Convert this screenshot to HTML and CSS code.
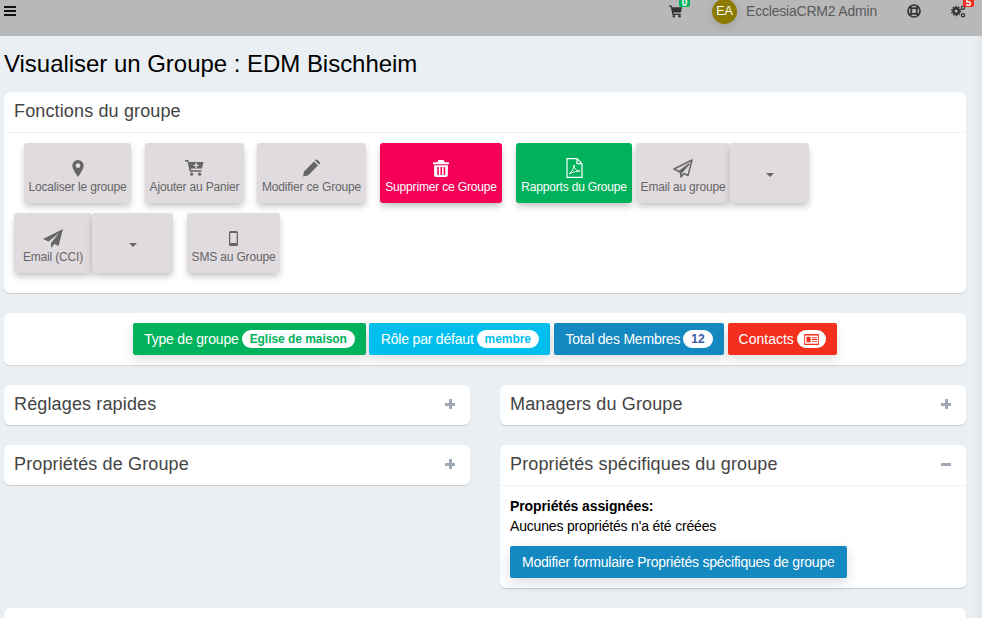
FILE: index.html
```html
<!DOCTYPE html>
<html lang="fr">
<head>
<meta charset="utf-8">
<title>Visualiser un Groupe</title>
<link rel="stylesheet" href="styles.css">
</head>
<body>
<header class="navbar">
  <svg class="burger" viewBox="0 0 12 10" width="12" height="10"><path d="M0 0h12v2H0zM0 4h12v2H0zM0 8h12v2H0z" fill="#111"/></svg>
  <div class="nav-right">
    <span class="nav-item cart">
      <svg viewBox="0 0 16 14" width="14" height="13"><path d="M0 0h3l.5 2H15l-1.500 6H5l.3 1.500H13.500V11H4L2 1.500H0z" fill="#333"/><circle cx="5.500" cy="12.500" r="1.400" fill="#333"/><circle cx="12" cy="12.500" r="1.400" fill="#333"/></svg>
      <span class="nav-badge green">0</span>
    </span>
    <span class="avatar">EA</span>
    <span class="nav-user">EcclesiaCRM2 Admin</span>
    <svg class="lifebuoy" viewBox="0 0 14 14" width="14" height="14"><circle cx="7" cy="7" r="6" fill="none" stroke="#333" stroke-width="1.700"/><circle cx="7" cy="7" r="3" fill="none" stroke="#333" stroke-width="1.500"/><path d="M2.800 2.800l2.200 2.200M11.200 2.800L9 5M2.800 11.200L5 9M11.200 11.200L9 9" stroke="#333" stroke-width="2.200"/></svg>
    <span class="nav-item cogs">
      <svg viewBox="0 0 16 14" width="15" height="14"><circle cx="5.500" cy="7" r="3" fill="none" stroke="#333" stroke-width="2.600"/><circle cx="5.500" cy="7" r="4.900" fill="none" stroke="#333" stroke-width="1.300" stroke-dasharray="1.600 1.480"/><circle cx="12.800" cy="11.500" r="1.700" fill="none" stroke="#333" stroke-width="1.400"/><circle cx="12.800" cy="3.500" r="1.700" fill="none" stroke="#333" stroke-width="1.400"/></svg>
      <span class="nav-badge red">5</span>
    </span>
  </div>
</header>
<main class="content">
  <h1 class="page-title">Visualiser un Groupe : EDM Bischheim</h1>

  <section class="card">
    <h2 class="card-head">Fonctions du groupe</h2>
    <div class="actions">
      <div class="btn-row first">
        <a class="app w107 gap14"><span class="ico"><svg viewBox="0 0 12 18" width="12" height="17"><path fill-rule="evenodd" d="M6 0a6 6 0 0 1 6 6c0 3-3.500 8.500-6 12C3.500 14.500 0 9 0 6a6 6 0 0 1 6-6zm0 3.500a2.500 2.500 0 1 0 0 5 2.500 2.500 0 0 0 0-5z" fill="#666"/></svg></span><span>Localiser le groupe</span></a>
        <a class="app w99 gap13"><span class="ico"><svg viewBox="0 0 20 17" width="19" height="16"><path fill-rule="evenodd" d="M0 0h3.500l.5 2h15.500l-1.500 7H6l.4 2h11v1.500H5L2.500 1.500H0zM11 3v2H9v1.500h2v2h1.500v-2h2V5h-2V3z" fill="#666"/><circle cx="7" cy="15" r="1.800" fill="#666"/><circle cx="15.500" cy="15" r="1.800" fill="#666"/></svg></span><span>Ajouter au Panier</span></a>
        <a class="app w109 gap14"><span class="ico"><svg viewBox="0 0 17 17" width="17" height="18"><path d="M0 17l1-5 10-10 4 4L5 16zM12 1l1-1h1l3 3v1l-1 1z" fill="#666"/></svg></span><span>Modifier ce Groupe</span></a>
        <a class="app w122 gap14 danger"><span class="ico"><svg viewBox="0 0 15 16" width="16" height="17"><path fill-rule="evenodd" d="M5 0h5l1 2h4v2H0V2h4zM1 5h13v9a2 2 0 0 1-2 2H3a2 2 0 0 1-2-2zm3 1.500v7.500h1.500V6.500zm3 0v7.500h1.500V6.500zm3 0v7.500h1.500V6.500z" fill="#fff"/></svg></span><span>Supprimer ce Groupe</span></a>
        <a class="app w116 gap4 success"><span class="ico"><svg viewBox="0 0 17 20" width="17" height="20"><path d="M1 .7h10l5 5v13.600H1zM11 .7v5h5" fill="none" stroke="#fff" stroke-width="1.200"/><path d="M3 16c3-2 5-6 5-9 0 3 2 6 6 6-3 0-7 1-11 3z" fill="none" stroke="#fff" stroke-width="1"/></svg></span><span>Rapports du Groupe</span></a>
        <a class="app w94"><span class="ico"><svg viewBox="0 0 20 19" width="20" height="19"><path d="M19 1L1 10l5 2.500L16 5 8 14v4l3-3.500 4 2z" fill="none" stroke="#666" stroke-width="1.500" stroke-linejoin="round"/><path d="M16 5L6 12.500 8 18v-4z" fill="#666"/></svg></span><span>Email au groupe</span></a>
        <a class="app w79 caret-btn"><i class="caret"></i></a>
      </div>
      <div class="btn-row">
        <a class="app w78"><span class="ico"><svg viewBox="0 0 20 19" width="20" height="19"><path d="M20 0L0 10l5.500 2.500L16 4 8 14v5l3.500-4 4 2z" fill="#666"/></svg></span><span>Email (CCI)</span></a>
        <a class="app w81 gap14 caret-btn"><i class="caret"></i></a>
        <a class="app w93"><span class="ico"><svg viewBox="0 0 9 15" width="9" height="15"><path fill-rule="evenodd" d="M1.500 0h6A1.500 1.500 0 0 1 9 1.500v12A1.500 1.500 0 0 1 7.500 15h-6A1.500 1.500 0 0 1 0 13.500v-12A1.500 1.500 0 0 1 1.500 0zM1.300 2v10h6.400V2z" fill="#666"/></svg></span><span>SMS au Groupe</span></a>
      </div>
    </div>
  </section>

  <section class="card summary">
    <a class="pill green-bg">Type de groupe <b class="tag t-green">Eglise de maison</b></a>
    <a class="pill cyan-bg">Rôle par défaut <b class="tag t-cyan">membre</b></a>
    <a class="pill blue-bg">Total des Membres <b class="tag t-blue">12</b></a>
    <a class="pill red-bg">Contacts <b class="tag t-red"><svg viewBox="0 0 16 12" width="15" height="11"><path fill-rule="evenodd" d="M0 0h16v12H0zM1 1.500v9h14v-9zM2.500 3h4.500v6H2.500zM8.500 3.500H14v1H8.500zM8.500 5.500H14v1H8.500zM8.500 7.500H14v1H8.500z" fill="#f52f1e"/></svg></b></a>
  </section>

  <div class="columns">
    <div class="column">
      <section class="card collapsed"><h2 class="card-head"><span>Réglages rapides</span><i class="tool plus"></i></h2></section>
      <section class="card collapsed"><h2 class="card-head"><span>Propriétés de Groupe</span><i class="tool plus"></i></h2></section>
    </div>
    <div class="column">
      <section class="card collapsed"><h2 class="card-head"><span>Managers du Groupe</span><i class="tool plus"></i></h2></section>
      <section class="card">
        <h2 class="card-head"><span>Propriétés spécifiques du groupe</span><i class="tool"></i></h2>
        <div class="props">
          <strong class="props-title">Propriétés assignées:</strong>
          <p class="props-text">Aucunes propriétés n'a été créées</p>
          <a class="form-btn">Modifier formulaire Propriétés spécifiques de groupe</a>
        </div>
      </section>
    </div>
  </div>
  <section class="card last"></section>
</main>
</body>
</html>
```
FILE: styles.css
```css
* { box-sizing: border-box; }
html, body { margin: 0; height: 618px; overflow: hidden; }
body { background: #eaeff4; font-family: "Liberation Sans", Arial, sans-serif; color: #000; }

.navbar { height: 36px; background: #b8b8b8; display: flex; justify-content: space-between; align-items: flex-start; padding: 6px 0 0 4px; }
.burger { display: block; }
.nav-right { display: flex; align-items: flex-start; height: 24px; margin-top: -6px; }
.nav-item { position: relative; display: block; }
.nav-item svg { display: block; }
.cart { margin: 5px 0 0 0; width: 14px; }
.cogs { margin: 4px 16px 0 30px; width: 15px; }
.nav-badge { position: absolute; top: -5px; left: 10px; width: 11px; height: 7px; color: #fff; font-size: 10px; font-weight: 700; line-height: 6px; text-align: center; border-radius: 0 0 2px 2px; overflow: hidden; }
.cogs .nav-badge { left: 12px; top: -4px; }
.green { background: #00b25c; }
.red { background: #f52f1e; }
.avatar { width: 25px; height: 25px; margin: -1px 0 0 29px; border-radius: 50%; background: #8c7b00; color: #fff; font-size: 12.500px; line-height: 25px; text-align: center; box-shadow: 0 3px 8px rgba(0,0,0,.12); }
.nav-user { margin: 4px 0 0 9px; font-size: 14px; letter-spacing: -.2px; line-height: 15px; color: #5a5a5a; white-space: nowrap; }
.lifebuoy { margin: 4px 0 0 30px; display: block; }

.content { padding: 0 16px 0 4px; height: 582px; overflow: hidden; box-shadow: inset -12px 0 10px -9px rgba(0,0,0,.06); }
.page-title { margin: 0; padding-top: 13px; height: 56px; font-size: 24px; line-height: 30px; font-weight: 400; letter-spacing: -.03px; }

.card { display: block; background: #fff; border-radius: 6px; box-shadow: 0 1px 1px rgba(0,0,0,.15); margin-bottom: 20px; }
.card-head { margin: 0; height: 41px; padding: 0 15px 2px 10px; display: flex; justify-content: space-between; align-items: center; font-size: 18px; font-weight: 400; line-height: 38px; letter-spacing: .14px; color: #444; border-bottom: 1px solid #f2f2f2; }

.actions { padding: 10px 10px 20px; height: 160px; }
.btn-row { display: flex; margin-bottom: 10px; }
.btn-row.first { margin-left: 10px; }
.app { display: flex; flex-direction: column; align-items: center; height: 60px; padding-top: 14px; background: #e0dbde; border-radius: 3px; color: #666; font-size: 12px; letter-spacing: -.17px; line-height: 15px; white-space: nowrap; box-shadow: 0 4px 7px -1px rgba(0,0,0,.25); }
.ico { display: flex; align-items: center; justify-content: center; height: 22px; margin-bottom: 1px; }
.ico svg { display: block; }
.w107 { width: 107px; } .w99 { width: 99px; } .w109 { width: 109px; } .w122 { width: 122px; } .w116 { width: 116px; } .w94 { width: 94px; } .w79 { width: 79px; } .w78 { width: 78px; } .w81 { width: 81px; } .w93 { width: 93px; }
.gap14 { margin-right: 14px; } .gap13 { margin-right: 13px; } .gap4 { margin-right: 4px; }
.danger { background: #f50057; color: #fff; }
.success { background: #00b25c; color: #fff; }
.caret-btn { justify-content: center; padding: 0; }
.caret { display: block; width: 0; height: 0; border-left: 4px solid transparent; border-right: 4px solid transparent; border-top: 4px solid #666; margin-top: 3px; }

.summary { height: 52px; display: flex; justify-content: center; align-items: center; gap: 3.500px; box-shadow: 0 1px 1px rgba(0,0,0,.1); }
.pill { display: flex; align-items: center; gap: 3px; height: 32px; padding: 0 11px; border-radius: 2px; color: #fff; font-size: 14px; letter-spacing: -.2px; white-space: nowrap; box-shadow: 0 5px 12px rgba(0,0,0,.12); }
.green-bg { background: #00b25c; } .cyan-bg { background: #00bfef; padding: 0 11.500px; } .blue-bg { background: #1488c0; padding: 0 11.500px; } .red-bg { background: #f52f1e; letter-spacing: 0; }
.tag { display: flex; align-items: center; justify-content: center; height: 18px; padding: 0 8px; border-radius: 9px; background: #fff; font-size: 12px; font-weight: 700; letter-spacing: -.05px; }
.t-green { color: #00b25c; } .t-cyan { color: #00bfef; } .t-blue { color: #3a5ca8; } .t-red { color: #f52f1e; padding: 0 7px; }

.columns { display: grid; grid-template-columns: 466px 466px; column-gap: 30px; }
.collapsed .card-head { height: 40px; border-bottom: 0; }
.tool { display: block; width: 10px; height: 3px; background: #a0a8b8; position: relative; }
.plus::after { content: ""; position: absolute; left: 3.500px; top: -3.500px; width: 3px; height: 10px; background: #a0a8b8; }
.props { padding: 10px 10px 10px; height: 102px; }
.props-title { display: block; font-size: 14px; letter-spacing: -.1px; line-height: 20px; }
.props-text { margin: 0 0 10px; font-size: 14px; letter-spacing: -.18px; line-height: 20px; }
.form-btn { display: inline-block; height: 32px; padding: 0 12px; line-height: 32px; border-radius: 2px; background: #1488c0; color: #fff; font-size: 14px; letter-spacing: -.23px; white-space: nowrap; box-shadow: 0 5px 14px rgba(0,0,0,.14); }
.last { height: 40px; }
```
